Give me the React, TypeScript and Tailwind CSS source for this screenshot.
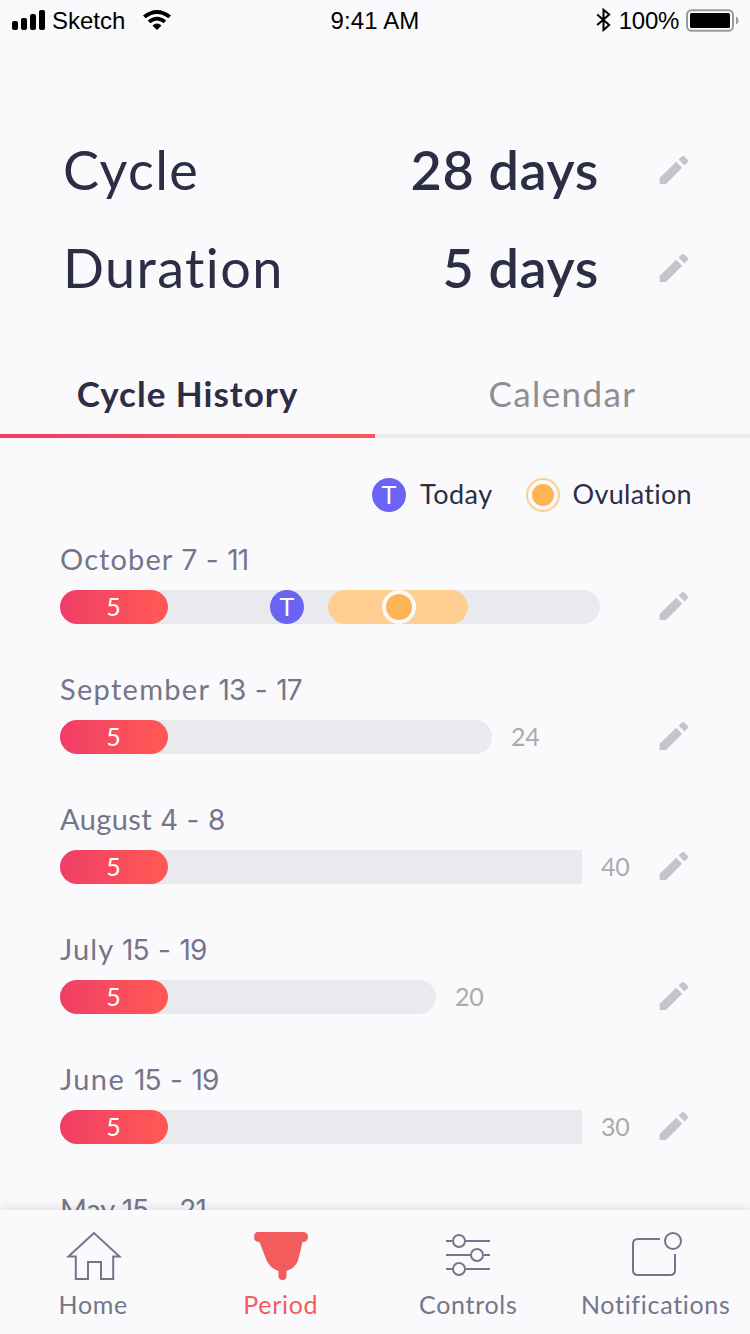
import React from "react";

function Pencil() {
  return (
    <svg className="h-[30px] w-[30px] shrink-0" viewBox="0 0 30 30" fill="#c5c4cd">
      <path d="M.6 28.9V23.1L17.2 6.7L23.2 12.7L7 28.9Z" />
      <path d="M19.6 4.6L22.8 1.5Q24.1.3 25.4 1.5L28.6 4.7Q29.9 6 28.6 7.3L25.5 10.4Z" />
    </svg>
  );
}

function StatusBar() {
  return (
    <header className="grid h-10 grid-cols-3 items-center px-3 font-['Liberation_Sans',sans-serif] text-[24px] leading-10 text-black">
      <div className="flex items-center">
        <svg className="h-5 w-[34px]" viewBox="0 0 34 20">
          <rect x="0" y="11" width="6" height="9" rx="2" />
          <rect x="9" y="8" width="6" height="12" rx="2" />
          <rect x="18" y="4" width="6" height="16" rx="2" />
          <rect x="27" y="0" width="6" height="20" rx="2" />
        </svg>
        <span className="ml-[6px] translate-y-px">Sketch</span>
        <svg className="ml-[18px] h-5 w-7" viewBox="0 0 28 20">
          <path d="M0 5.5Q14-5.5 28 5.5L25.4 8.3Q14-.5 2.6 8.3Z" />
          <path d="M4.8 10.5Q14 3 23.2 10.5L20.6 13.2Q14 7.8 7.4 13.2Z" />
          <path d="M9.5 15.4Q14 11.7 18.5 15.4L14 20Z" />
        </svg>
      </div>
      <span className="translate-y-px text-center tracking-[0.1px]">9:41 AM</span>
      <div className="flex items-center justify-end">
        <svg className="h-[24px] w-[15px]" viewBox="0 0 15 24" fill="none" stroke="#000" strokeWidth="2">
          <path d="M1.2 6.5L13.2 17L7.5 22V1.8L13.2 6.5L1.2 17" />
        </svg>
        <span className="ml-2 translate-y-px tracking-[-0.3px]">100%</span>
        <svg className="-mr-[1px] ml-[6px] h-6 w-[54px]" viewBox="0 0 54 24">
          <rect x="2" y="2.2" width="46" height="20.6" rx="4.5" fill="none" stroke="#9a9a9b" strokeWidth="2" />
          <rect x="5" y="5" width="40" height="15" rx="1.5" />
          <path d="M51 8.5Q53.5 9.5 53.5 12.5T51 16.5Z" fill="#9a9a9b" />
        </svg>
      </div>
    </header>
  );
}

function Setting({ label, value }: { label: string; value: string }) {
  return (
    <div className="flex h-[98px] items-center text-[54px] leading-[98px] text-[#2b2e45]">
      <span className="flex-1 pt-[2px] tracking-[1.4px]">{label}</span>
      <span className="pt-[2px] font-semibold tracking-[0.6px]">{value}</span>
      <span className="ml-[60px] mt-[2px] flex">
        <Pencil />
      </span>
    </div>
  );
}

function Today() {
  return (
    <span className="flex h-[34px] w-[34px] items-center justify-center rounded-full bg-[#6b63f3] text-[25px] leading-[32px] text-white">
      <span className="-mt-[2px]">T</span>
    </span>
  );
}

type Entry = {
  month: string;
  spacing: string;
  days: string;
  bar: string;
  total?: string;
  current?: boolean;
};

const entries: Entry[] = [
  { month: "October", spacing: "tracking-[1.1px]", days: "7 - 11", bar: "w-[540px] rounded-full", current: true },
  { month: "September", spacing: "tracking-[1.3px]", days: "13 - 17", bar: "w-[432px] rounded-full", total: "24" },
  { month: "August", spacing: "tracking-[0.4px]", days: "4 - 8", bar: "w-[522px] rounded-l-full", total: "40" },
  { month: "July", spacing: "tracking-[1.1px]", days: "15 - 19", bar: "w-[376px] rounded-full", total: "20" },
  { month: "June", spacing: "tracking-[1.4px]", days: "15 - 19", bar: "w-[522px] rounded-l-full", total: "30" },
  { month: "May", spacing: "tracking-[-0.1px]", days: "15 - 21", bar: "w-[540px] rounded-full" },
];

function CycleRow({ month, spacing, days, bar, total, current }: Entry) {
  return (
    <li className="flex h-[130px] flex-col">
      <div className={`h-[50px] text-[29px] leading-[38px] text-[#74758a] ${spacing}`}>
        {month} <span className="font-['Inter',sans-serif] text-[28px] tracking-[-0.9px] [word-spacing:2.5px]">{days}</span>
      </div>
      <div className="flex h-[34px] items-center">
        <div className={`relative h-[34px] bg-[#e9eaed] ${bar}`}>
          <div className="h-[34px] w-[108px] rounded-full bg-linear-to-r from-[#f03d66] to-[#ff5756] to-90% pr-px text-center text-[25px] leading-[33px] text-white">
            5
          </div>
          {current && (
            <>
              <div className="absolute left-[210px] top-0">
                <Today />
              </div>
              <div className="absolute left-[268px] top-0 flex h-[34px] w-[140px] items-center justify-center rounded-full bg-[#ffce91] pl-[2px]">
                <span className="h-[34px] w-[34px] rounded-full border-4 border-[#fafafc] bg-[#ffb454]" />
              </div>
            </>
          )}
        </div>
        {total && <span className="-mt-[2px] ml-[19px] text-[25px] leading-[34px] tracking-[-0.3px] text-[#ababad]">{total}</span>}
        <span className="-mt-[2px] ml-auto flex">
          <Pencil />
        </span>
      </div>
    </li>
  );
}

function NavItem({ label, children, active }: { label: string; children: React.ReactNode; active?: boolean }) {
  return (
    <a className={`flex w-1/4 flex-col items-center pt-5 ${active ? "text-[#f35c5c]" : "text-[#74758a]"}`}>
      <svg className="h-[52px] w-[60px]" viewBox="0 0 60 52" fill="none" stroke="currentColor" strokeWidth="2">
        {children}
      </svg>
      <span className="mt-[5px] pr-px text-[25px] leading-[34px] tracking-[0.7px]">{label}</span>
    </a>
  );
}

export default function App() {
  return (
    <div className="flex h-[1334px] w-[750px] flex-col overflow-hidden bg-[#fafafc] font-['Lato',sans-serif]">
      <StatusBar />
      <section className="mt-20 pl-[63px] pr-[61px]">
        <Setting label="Cycle" value="28 days" />
        <Setting label="Duration" value="5 days" />
      </section>
      <nav className="mt-10 flex h-[82px] text-center text-[35px] leading-[75px]">
        <a className="flex w-1/2 flex-col font-bold tracking-[1px] text-[#2b2e45]">
          <span className="h-[78px]">Cycle History</span>
          <span className="h-1 bg-linear-to-r from-[#f03d66] to-[#ff5756]" />
        </a>
        <a className="flex w-1/2 flex-col tracking-[1.4px] text-[#8f8f91]">
          <span className="h-[78px]">Calendar</span>
          <span className="h-1 bg-[#e9eaed]" />
        </a>
      </nav>
      <div className="mt-10 flex h-[34px] items-center justify-end pr-[58px] text-[27px] leading-[34px] tracking-[0.3px] text-[#2b2e45]">
        <Today />
        <span className="-mt-[2px] ml-[14px] mr-[33px] tracking-[0.5px]">Today</span>
        <span className="flex h-[34px] w-[34px] items-center justify-center rounded-full border-2 border-[#ffce91]">
          <span className="h-[22px] w-[22px] rounded-full bg-[#ffb454]" />
        </span>
        <span className="-mt-[2px] ml-[13px]">Ovulation</span>
      </div>
      <ul className="mt-7 min-h-0 flex-1 overflow-hidden pl-[60px] pr-[61px]">
        {entries.map((e) => (
          <CycleRow key={e.month} {...e} />
        ))}
      </ul>
      <footer className="relative flex h-[124px] shrink-0 bg-[#fafafc] shadow-[0_0_12px_rgba(0,0,0,0.15)]">
        <NavItem label="Home">
          <path d="M30 3L4.500 26.500H11.800V49H24V32H37V49H49.200V26.500H55.500Z" />
        </NavItem>
        <NavItem label="Period" active>
          <path
            d="M7 2H51.500Q57 2 57 7T51.500 12L47.500 29Q45 38 35.500 41V46Q35.500 50 31.500 50T27.500 46V41Q18.500 38 15 29L8.500 12Q3 12 3 7T7 2Z"
            fill="currentColor"
            stroke="none"
          />
        </NavItem>
        <NavItem label="Controls">
          <path d="M7 11H13M27 11H51M7 25H31M45 25H51M7 39H13M27 39H51" />
          <circle cx="20" cy="11" r="6" />
          <circle cx="38" cy="25" r="6" />
          <circle cx="20" cy="39" r="6" />
        </NavItem>
        <NavItem label="Notifications">
          <path d="M34 9H12Q7 9 7 14V40Q7 45 12 45H44Q49 45 49 40V24" />
          <circle cx="47" cy="11" r="8" />
        </NavItem>
      </footer>
    </div>
  );
}
